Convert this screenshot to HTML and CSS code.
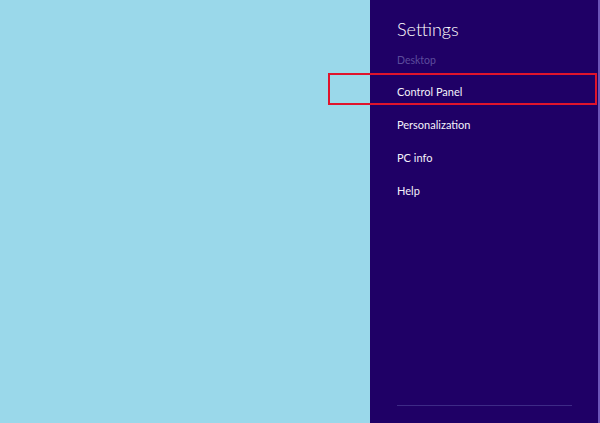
FILE: index.html
```html
<!DOCTYPE html>
<html>
<head>
<meta charset="utf-8">
<link rel="stylesheet" href="styles.css">
</head>
<body>
<div class="screen">
  <div class="desktop"></div>
  <div class="charm">
    <div class="title">Settings</div>
    <div class="context">Desktop</div>
    <ul class="menu">
      <li class="item">Control Panel</li>
      <li class="item">Personalization</li>
      <li class="item">PC info</li>
      <li class="item">Help</li>
    </ul>
    <div class="spacer"></div>
    <div class="divider"></div>
  </div>
  <div class="highlight"></div>
</div>
</body>
</html>
```
FILE: styles.css
```css
html, body {
  margin: 0;
  padding: 0;
  width: 600px;
  height: 423px;
  overflow: hidden;
}
.screen {
  position: relative;
  display: flex;
  width: 600px;
  height: 423px;
  font-family: "Lato", "Open Sans", sans-serif;
}
.desktop {
  flex: 1;
  background: #9ad8ea;
}
.charm {
  background: #1f0066;
  border-right: 2px solid #6c55b8;
  display: flex;
  flex-direction: column;
  padding-left: 27px;
  box-sizing: content-box;
  width: 201px;
}
.title {
  color: #ffffff;
  font-size: 18px;
  font-weight: 300;
  line-height: 22px;
  margin-top: 18px;
}
.context {
  color: #5c4c9c;
  font-size: 10.5px;
  line-height: 14px;
  margin-top: 13px;
}
.menu {
  list-style: none;
  margin: 8px 0 0 0;
  padding: 0;
}
.item {
  color: #f4f2fa;
  font-size: 11px;
  height: 33px;
  line-height: 33px;
}
.spacer {
  flex: 1;
}
.divider {
  width: 175px;
  height: 1px;
  background: #3d2a86;
  margin-bottom: 17px;
}
.highlight {
  position: absolute;
  left: 328px;
  top: 73px;
  width: 265px;
  height: 28px;
  border: 2px solid #e0142c;
}
```
